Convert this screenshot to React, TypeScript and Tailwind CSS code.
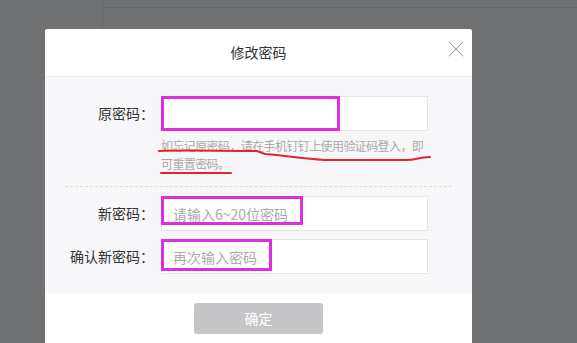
import { X } from 'lucide-react';

const cjk = { fontFamily: '"Noto Sans CJK SC", "Noto Sans", sans-serif' };

function Field({
  label,
  placeholder,
  markWidth,
  markHeight,
}: {
  label: string;
  placeholder?: string;
  markWidth: number;
  markHeight: number;
}) {
  return (
    <div className="flex items-center">
      <label className="w-[111px] pr-[2px] text-right text-[14px] text-[#333]">{label}</label>
      <div className="relative ml-[5px] h-[35px] w-[267px] border border-[#e6e6e6] bg-white">
        <input
          type="password"
          placeholder={placeholder}
          className="h-full w-full bg-transparent pl-[11px] text-[14px] text-[#333] outline-none placeholder:text-[#aaa]"
        />
        {/* annotation box drawn over the screenshot */}
        <div
          className="pointer-events-none absolute -left-px -top-px border-[3px] border-[#de2ee0]"
          style={{ width: markWidth, height: markHeight }}
        />
      </div>
    </div>
  );
}

function App() {
  return (
    <div className="relative h-[343px] w-[577px] overflow-hidden bg-[#707173]" style={cjk}>
      {/* page behind the mask */}
      <div className="flex h-full">
        <div className="w-[103px] border-r border-[#666769]" />
        <div className="flex-1">
          <div className="h-[8px] border-b border-[#666769]" />
        </div>
      </div>

      <div className="absolute left-[45px] top-[29px] w-[427px] rounded-t-[2px] bg-white">
        <div className="relative flex h-[48px] items-center justify-center border-b border-[#ececec]">
          <span className="text-[14px] text-[#333]">修改密码</span>
          <button className="absolute right-[2px] top-[6px] text-[#9a9a9a]">
            <X size={28} strokeWidth={0.9} />
          </button>
        </div>

        <div className="bg-[#f7f7f9] pb-[19px] pt-[19px]">
          <Field label="原密码：" markWidth={179} markHeight={35} />
          <div className="relative ml-[116px] mt-[6px] w-[270px] text-[12px] leading-[18px] tracking-[-0.6px] text-[#aaa]">
            如忘记原密码，请在手机钉钉上使用验证码登入，即
            <br />
            可重置密码。
            <svg
              className="pointer-events-none absolute left-[-4px] top-0"
              width="280"
              height="44"
              viewBox="0 0 280 44"
            >
              <path
                d="M2 14 C30 13 60 14 100 14 L108 17 C140 20 160 23 173 23 L250 23 C258 23 262 20 273 20"
                fill="none"
                stroke="#e0262b"
                strokeWidth="2"
                strokeLinecap="round"
              />
              <path d="M4 36 L74 36" fill="none" stroke="#e0262b" strokeWidth="2.2" strokeLinecap="round" />
            </svg>
          </div>

          <div className="mx-[20px] mb-[9px] mt-[13px] border-t border-dashed border-[#dcdcdc]" />

          <div className="flex flex-col gap-[8px]">
            <Field label="新密码：" placeholder="请输入6~20位密码" markWidth={142} markHeight={29} />
            <Field label="确认新密码：" placeholder="再次输入密码" markWidth={111} markHeight={32} />
          </div>
        </div>

        <div className="flex h-[60px] justify-center pt-[10px]">
          <button className="h-[31px] w-[129px] rounded-[3px] bg-[#c6c6c9] text-[14px] text-white">确定</button>
        </div>
      </div>
    </div>
  );
}

export default App;
